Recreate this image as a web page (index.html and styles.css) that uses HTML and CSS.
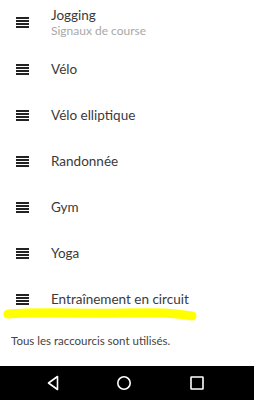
FILE: index.html
```html
<!DOCTYPE html>
<html lang="fr">
<head>
<meta charset="utf-8">
<link rel="stylesheet" href="styles.css">
</head>
<body>
<div class="screen">
  <ul class="list">
    <li class="row first">
      <span class="handle"><i></i><i></i><i></i><i></i></span>
      <div class="label">
        <div class="title">Jogging</div>
        <div class="sub">Signaux de course</div>
      </div>
    </li>
    <li class="row"><span class="handle"><i></i><i></i><i></i><i></i></span><div class="title">Vélo</div></li>
    <li class="row"><span class="handle"><i></i><i></i><i></i><i></i></span><div class="title">Vélo elliptique</div></li>
    <li class="row"><span class="handle"><i></i><i></i><i></i><i></i></span><div class="title">Randonnée</div></li>
    <li class="row"><span class="handle"><i></i><i></i><i></i><i></i></span><div class="title">Gym</div></li>
    <li class="row"><span class="handle"><i></i><i></i><i></i><i></i></span><div class="title">Yoga</div></li>
    <li class="row last"><span class="handle"><i></i><i></i><i></i><i></i></span><div class="title">Entraînement en circuit</div>
      <svg class="marker" width="196" height="18" viewBox="0 0 196 18"><path d="M6 8 C 40 5, 80 8, 120 7 S 170 7, 190 10" stroke="#ffff00" stroke-width="9" fill="none" stroke-linecap="round"/></svg>
    </li>
  </ul>
  <p class="note">Tous les raccourcis sont utilisés.</p>
  <div class="spacer"></div>
  <nav class="navbar">
    <svg width="12" height="16" viewBox="0 0 12 16"><path d="M10.5 1.5 L1.5 8 L10.5 14.5 Z" stroke="#fff" stroke-width="1.6" fill="none" stroke-linejoin="round"/></svg>
    <svg width="16" height="16" viewBox="0 0 16 16"><circle cx="8" cy="8" r="6.2" stroke="#fff" stroke-width="1.6" fill="none"/></svg>
    <svg width="16" height="16" viewBox="0 0 16 16"><rect x="2" y="2" width="12" height="12" stroke="#fff" stroke-width="1.6" fill="none" rx="0.5"/></svg>
  </nav>
</div>
</body>
</html>
```
FILE: styles.css
```css
* { box-sizing: border-box; }
html, body { margin: 0; padding: 0; background: #fff; }
body { font-family: Lato, "Open Sans", sans-serif; color: #3a3a3a; }
.screen { width: 254px; height: 400px; display: flex; flex-direction: column; }
.list { list-style: none; margin: 0; padding: 0; }
.row { height: 46px; display: flex; align-items: center; position: relative; }
.row.first { height: 46px; align-items: flex-start; padding-top: 6px; }
.row.first .handle { margin-top: 11px; }
.handle { width: 13px; margin-left: 16px; margin-right: 22px; display: flex; flex-direction: column; gap: 1px; }
.handle i { display: block; height: 2px; background: #222; }
.title { font-size: 13.5px; color: #3a3a3a; line-height: 18px; }
.row:not(.first) .title { margin-top: -1px; }
.sub { font-size: 12px; color: #a8a8a8; line-height: 14px; margin-top: 0; }
.marker { position: absolute; left: 2px; top: 30px; }
.note { margin: 0; padding: 12px 0 0 11px; font-size: 11.5px; color: #444; line-height: 14px; }
.spacer { flex: 1; }
.navbar { height: 34px; background: #000; display: flex; align-items: center; justify-content: space-between; padding: 0 49px 0 47px; }
```
